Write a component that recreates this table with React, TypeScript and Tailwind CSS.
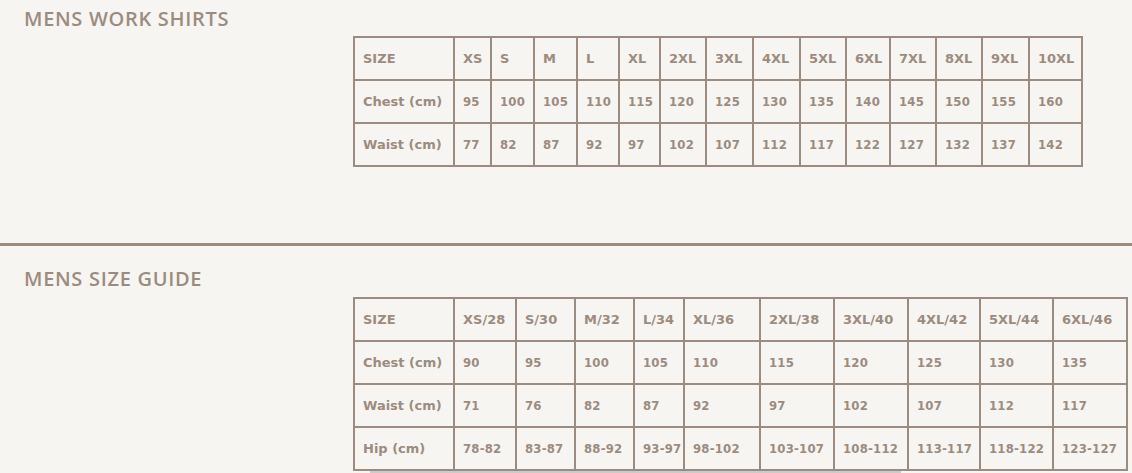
import React from 'react';

type Table = {
    widths: number[];
    rows: string[][];
};

const workShirts: Table = {
    widths: [100, 37, 43, 43, 42, 41, 46, 47, 47, 46, 44, 46, 46, 47, 53],
    rows: [
        ['SIZE', 'XS', 'S', 'M', 'L', 'XL', '2XL', '3XL', '4XL', '5XL', '6XL', '7XL', '8XL', '9XL', '10XL'],
        ['Chest (cm)', '95', '100', '105', '110', '115', '120', '125', '130', '135', '140', '145', '150', '155', '160'],
        ['Waist (cm)', '77', '82', '87', '92', '97', '102', '107', '112', '117', '122', '127', '132', '137', '142'],
    ],
};

const sizeGuide: Table = {
    widths: [100, 62, 59, 59, 50, 76, 74, 74, 72, 73, 74],
    rows: [
        ['SIZE', 'XS/28', 'S/30', 'M/32', 'L/34', 'XL/36', '2XL/38', '3XL/40', '4XL/42', '5XL/44', '6XL/46'],
        ['Chest (cm)', '90', '95', '100', '105', '110', '115', '120', '125', '130', '135'],
        ['Waist (cm)', '71', '76', '82', '87', '92', '97', '102', '107', '112', '117'],
        ['Hip (cm)', '78-82', '83-87', '88-92', '93-97', '98-102', '103-107', '108-112', '113-117', '118-122', '123-127'],
    ],
};

const SizeTable: React.FC<{ table: Table }> = ({ table }) => (
    <table
        className="table-fixed border-collapse border-2 border-[#9b8c7f] text-[13px] font-bold text-[#9b8c7f]"
        style={{ width: table.widths.reduce((a, b) => a + b, 0) + 2 }}
    >
        <colgroup>
            {table.widths.map((w, i) => (
                <col key={i} style={{ width: w }} />
            ))}
        </colgroup>
        <tbody>
            {table.rows.map((row, r) => (
                <tr key={r} className="h-[43px]">
                    {row.map((cell, c) => (
                        <td
                            key={c}
                            className={
                                r === 0 || c === 0
                                    ? "border-2 border-[#9b8c7f] pl-[8px] pr-0 align-middle whitespace-nowrap font-['DejaVu_Sans',sans-serif]"
                                    : "border-2 border-[#9b8c7f] pl-[8px] pr-0 align-middle whitespace-nowrap font-['DejaVu_Sans_Condensed','DejaVu_Sans',sans-serif] font-stretch-condensed tracking-[0.2px]"
                            }
                        >
                            {cell}
                        </td>
                    ))}
                </tr>
            ))}
        </tbody>
    </table>
);

const Heading: React.FC<{ children: React.ReactNode }> = ({ children }) => (
    <h2 className="px-6 font-['Open_Sans',sans-serif] text-[20px] leading-6 font-semibold tracking-[0.7px] text-[#9b8c7f]">
        {children}
    </h2>
);

export default function App() {
    return (
        <div className="min-h-[473px] w-[1132px] overflow-hidden bg-[#f7f5f1]">
            <section className="pt-[7px]">
                <Heading>MENS WORK SHIRTS</Heading>
                <div className="mt-[5px] ml-[353px]">
                    <SizeTable table={workShirts} />
                </div>
            </section>

            <hr className="mt-[76px] h-[3px] border-0 bg-[#9b8c7f]" />

            <section className="pt-[21px]">
                <Heading>MENS SIZE GUIDE</Heading>
                <div className="mt-[6px] ml-[353px]">
                    <SizeTable table={sizeGuide} />
                    <div className="ml-[17px] h-[3px] w-[531px] bg-[#cbcbcb]" />
                </div>
            </section>
        </div>
    );
}
